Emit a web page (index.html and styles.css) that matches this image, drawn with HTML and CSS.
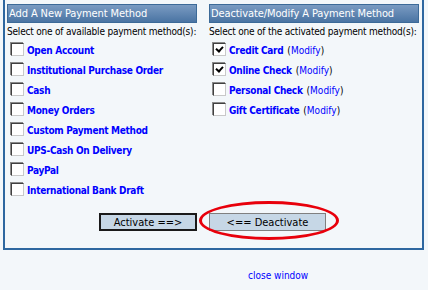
FILE: index.html
```html
<!DOCTYPE html>
<html lang="en">
  <head>
    <meta charset="UTF-8" />
    <title>Payment Methods</title>
    <link rel="stylesheet" href="styles.css">
  </head>
  <body>
    <div class="box">
      <div class="cols">
        <div class="col col-left">
          <div class="head">Add A New Payment Method</div>
          <div class="hint">Select one of available payment method(s):</div>
          <div class="row"><span class="cb"></span><a class="name">Open Account</a></div>
          <div class="row"><span class="cb"></span><a class="name">Institutional Purchase Order</a></div>
          <div class="row"><span class="cb"></span><a class="name">Cash</a></div>
          <div class="row"><span class="cb"></span><a class="name">Money Orders</a></div>
          <div class="row"><span class="cb"></span><a class="name">Custom Payment Method</a></div>
          <div class="row"><span class="cb"></span><a class="name">UPS-Cash On Delivery</a></div>
          <div class="row"><span class="cb"></span><a class="name">PayPal</a></div>
          <div class="row"><span class="cb"></span><a class="name">International Bank Draft</a></div>
        </div>
        <div class="col col-right">
          <div class="head">Deactivate/Modify A Payment Method</div>
          <div class="hint">Select one of the activated payment method(s):</div>
          <div class="row"><span class="cb on"></span><a class="name">Credit Card</a><span class="mod">(<a>Modify</a>)</span></div>
          <div class="row"><span class="cb on"></span><a class="name">Online Check</a><span class="mod">(<a>Modify</a>)</span></div>
          <div class="row"><span class="cb"></span><a class="name">Personal Check</a><span class="mod">(<a>Modify</a>)</span></div>
          <div class="row"><span class="cb"></span><a class="name">Gift Certificate</a><span class="mod">(<a>Modify</a>)</span></div>
        </div>
      </div>
      <div class="actions">
        <button class="btn btn-act">Activate ==&gt;</button>
        <span class="deact-wrap">
          <button class="btn btn-deact">&lt;== Deactivate</button>
          <span class="ring"></span>
        </span>
      </div>
    </div>
    <div class="foot"><a class="close">close window</a></div>
  </body>
</html>
```

FILE: styles.css
```css
* {
  margin: 0;
  padding: 0;
}

body {
  background: #f3f7fa;
  font-family: "DejaVu Sans Condensed", "DejaVu Sans", Verdana, sans-serif;
  font-stretch: condensed;
  font-size: 10px;
  color: #000;
}

.box {
  margin-left: 3px;
  width: 417px;
  height: 244px;
  border: 2px solid #2e67a0;
  border-top: 0;
  padding-top: 4px;
}

.cols {
  display: flex;
  padding-left: 2px;
  gap: 12px;
}

.col-left {
  width: 190px;
}

.col-right {
  width: 210px;
}

.head {
  height: 17px;
  line-height: 17px;
  padding-left: 1px;
  color: #fff;
  font-size: 11px;
  letter-spacing: -0.1px;
  white-space: nowrap;
  background: linear-gradient(#7a9bc2, #4a74a3);
  border: 1px solid #3c6a98;
}

.hint {
  height: 18px;
  line-height: 18px;
  letter-spacing: -0.2px;
  white-space: nowrap;
}

.row {
  display: flex;
  align-items: flex-start;
  height: 20px;
  line-height: 20px;
  padding-left: 4px;
  white-space: nowrap;
}

.cb {
  display: inline-block;
  width: 11px;
  height: 11px;
  margin-top: 2px;
  background: #fff;
  border-top: 1px solid #404040;
  border-left: 1px solid #404040;
  border-right: 1px solid #c8c8c8;
  border-bottom: 1px solid #c8c8c8;
  box-shadow: -1px -1px 0 #8a8a8a;
  margin-right: 3px;
  position: relative;
}

.cb.on::after {
  content: "";
  position: absolute;
  left: 2px;
  top: 1px;
  width: 5px;
  height: 3px;
  border-left: 2px solid #000;
  border-bottom: 2px solid #000;
  transform: translate(0, 1px) rotate(-48deg);
}

.name {
  color: #0000ff;
  font-weight: bold;
  letter-spacing: -0.3px;
}

.mod {
  margin-left: 4px;
}

.mod a {
  color: #0000ff;
}

.actions {
  display: flex;
  justify-content: center;
  gap: 12px;
  margin-top: 12px;
  padding-right: 2px;
}

.btn {
  font-family: "DejaVu Sans Condensed", "DejaVu Sans", Verdana, sans-serif;
  font-stretch: condensed;
  font-size: 11px;
  height: 18px;
  background: #c6d7e6;
  color: #000;
}

.btn-act {
  width: 98px;
  border: 2px solid #1a1a1a;
}

.btn-deact {
  width: 117px;
  border: 1px solid #808080;
}

.deact-wrap {
  position: relative;
}

.ring {
  position: absolute;
  left: -10px;
  top: -12px;
  width: 134px;
  height: 33px;
  border: 3px solid #e8000b;
  border-radius: 50%;
}

.foot {
  padding: 20px 0 0 248px;
}

.close {
  color: #0000ff;
  font-size: 10px;
}
```
